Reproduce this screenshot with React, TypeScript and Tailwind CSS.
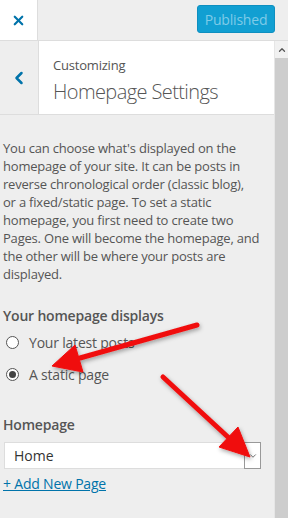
import React from "react";
import { ChevronDown, ChevronLeft, ChevronUp, X } from "lucide-react";

const descriptionLines = [
  "You can choose what's displayed on the",
  "homepage of your site. It can be posts in",
  "reverse chronological order (classic blog),",
  "or a fixed/static page. To set a static",
  "homepage, you first need to create two",
  "Pages. One will become the homepage, and",
  "the other will be where your posts are",
  "displayed.",
];

const Radio = ({ checked, label }: { checked?: boolean; label: string }) => (
  <label className="flex items-center h-[32px] gap-[10px] pl-[3px]">
    <span className="w-[13px] h-[13px] rounded-full border border-[#555] bg-white flex items-center justify-center">
      {checked && <span className="w-[7px] h-[7px] rounded-full bg-[#444]" />}
    </span>
    <span className="text-[14px] tracking-[-0.2px] text-[#555]">{label}</span>
  </label>
);

const Arrows = () => (
  <svg
    className="absolute inset-0 pointer-events-none"
    width={288}
    height={518}
    viewBox="0 0 288 518"
  >
    <defs>
      <filter id="sh" x="-20%" y="-20%" width="140%" height="140%">
        <feDropShadow dx="1" dy="2" stdDeviation="2" floodColor="#000" floodOpacity="0.35" />
      </filter>
    </defs>
    <g filter="url(#sh)" fill="#f01010" stroke="#f01010">
      <line x1={197} y1={325} x2={80} y2={358} strokeWidth={5} strokeLinecap="round" />
      <polygon points="52,366 75,345 83,372" strokeWidth={1} strokeLinejoin="round" />
      <line x1={163} y1={377} x2={229} y2={438} strokeWidth={5} strokeLinecap="round" />
      <polygon points="250,457 238,427 219,447" strokeWidth={1} strokeLinejoin="round" />
    </g>
  </svg>
);

export default function App() {
  return (
    <div
      className="relative w-[288px] h-[518px] overflow-hidden bg-[#eeeeee] flex flex-col"
      style={{ fontFamily: '"Open Sans", "Noto Sans", sans-serif' }}
    >
      <div className="h-[41px] flex border-b border-[#dddddd] shrink-0">
        <div className="w-[38px] bg-white border-r border-[#dddddd] flex items-center justify-center">
          <X className="w-[15px] h-[15px] text-[#0073aa]" strokeWidth={3.5} />
        </div>
        <div className="flex-1 flex justify-end items-start pt-[5px] pr-[13px]">
          <button className="h-[28px] w-[78px] rounded-[3px] bg-[#119fd2] text-[#7fcbe8] text-[14px] tracking-[-0.2px] border border-[#0e8fc0]">
            Published
          </button>
        </div>
      </div>

      <div className="flex flex-1 min-h-0">
        <div className="flex-1 flex flex-col">
          <div className="h-[74px] flex border-b border-[#dddddd] shrink-0">
            <div className="w-[39px] border-r border-[#dddddd] flex items-center justify-center">
              <ChevronLeft className="w-[20px] h-[20px] text-[#0073aa]" strokeWidth={3} />
            </div>
            <div className="flex-1 bg-white pl-[14px] pt-[15px]">
              <div className="text-[13px] leading-[18px] tracking-[-0.2px] text-[#555]">Customizing</div>
              <div className="mt-[5px] text-[20px] leading-[26px] tracking-[-0.6px] font-light text-[#555]">
                Homepage Settings
              </div>
            </div>
          </div>

          <div className="px-[3px] pt-[24px]">
            <p className="text-[13px] leading-[18px] tracking-[-0.2px] text-[#555]">
              {descriptionLines.map((line) => (
                <span key={line} className="block whitespace-nowrap">
                  {line}
                </span>
              ))}
            </p>

            <div className="mt-[23px] text-[14px] leading-[20px] tracking-[-0.2px] font-semibold text-[#555]">
              Your homepage displays
            </div>
            <Radio label="Your latest posts" />
            <Radio checked label="A static page" />

            <div className="mt-[25px] text-[14px] leading-[20px] tracking-[-0.2px] font-semibold text-[#555]">
              Homepage
            </div>
            <div className="mt-[7px] ml-px w-[257px] h-[27px] bg-white border border-[#dddddd] flex items-stretch">
              <span className="flex-1 pl-[9px] text-[14px] leading-[25px] text-[#333]">Home</span>
              <span className="w-[17px] border border-[#999] -m-px flex items-center justify-center">
                <ChevronDown className="w-[10px] h-[10px] text-[#555]" strokeWidth={2} />
              </span>
            </div>
            <a className="block mt-[5px] text-[14px] leading-[20px] tracking-[-0.2px] text-[#0073aa] underline">
              + Add New Page
            </a>
          </div>
        </div>

        <div className="w-[14px] flex flex-col shrink-0 border-l border-[#e6e6e6]">
          <div className="h-[17px] bg-[#f1f1f1] flex items-center justify-center">
            <ChevronUp className="w-[10px] h-[10px] text-[#555]" strokeWidth={3} />
          </div>
          <div className="flex-1 bg-[#cdcdcd]" />
        </div>
      </div>

      <Arrows />
    </div>
  );
}
